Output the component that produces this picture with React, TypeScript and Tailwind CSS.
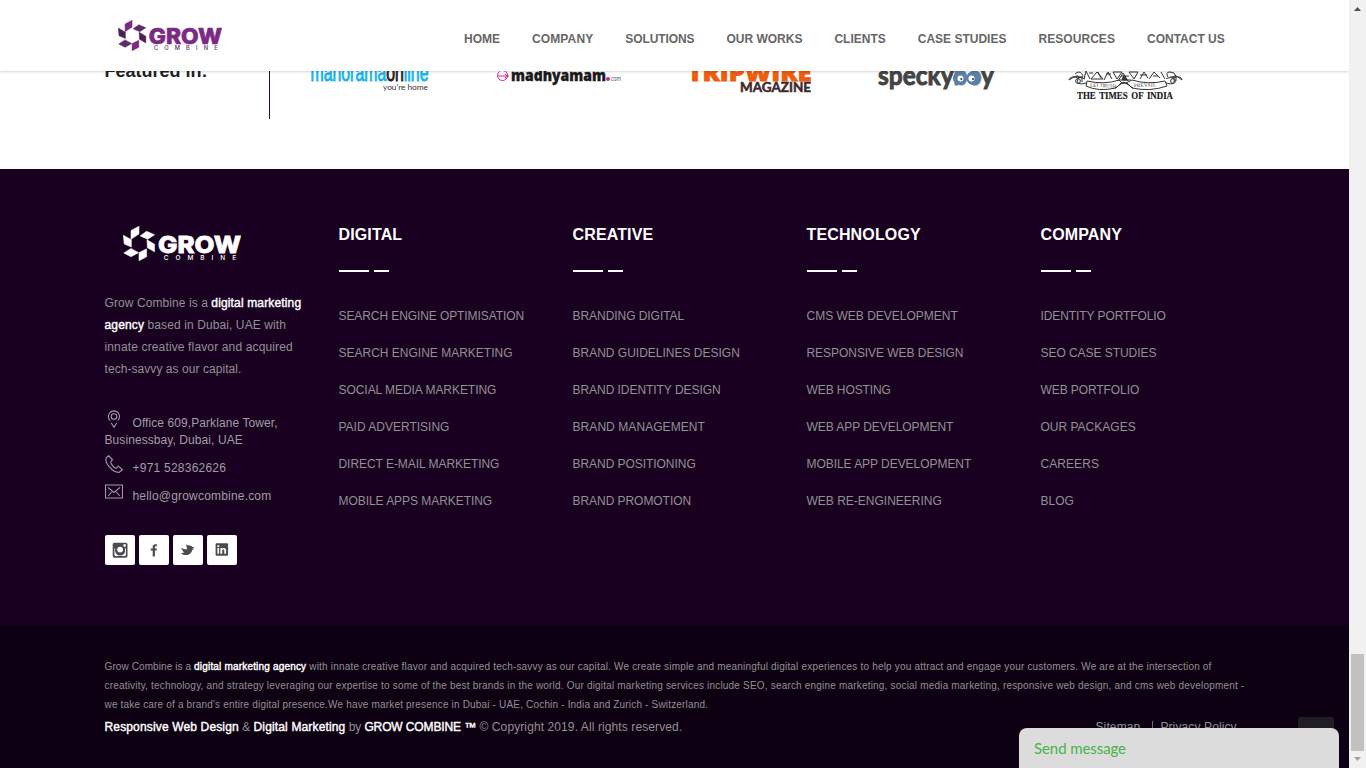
import React from "react";

const nav = [
  ["HOME", ""],
  ["COMPANY", "tracking-[0.12px]"],
  ["SOLUTIONS", "tracking-[-0.1px]"],
  ["OUR WORKS", ""],
  ["CLIENTS", ""],
  ["CASE STUDIES", ""],
  ["RESOURCES", "tracking-[0.06px]"],
  ["CONTACT US", ""],
];

const tight = "tracking-[-0.05px]";
const tighter = "tracking-[-0.09px]";
const loose = "tracking-[0.07px]";

const columns = [
  {
    title: "DIGITAL",
    links: [["SEARCH ENGINE OPTIMISATION", tighter], ["SEARCH ENGINE MARKETING", ""], ["SOCIAL MEDIA MARKETING", tight], ["PAID ADVERTISING", ""], ["DIRECT E-MAIL MARKETING", tight], ["MOBILE APPS MARKETING", tight]],
  },
  {
    title: "CREATIVE",
    links: [["BRANDING DIGITAL", tight], ["BRAND GUIDELINES DESIGN", ""], ["BRAND IDENTITY DESIGN", tight], ["BRAND MANAGEMENT", loose], ["BRAND POSITIONING", tight], ["BRAND PROMOTION", tight]],
  },
  {
    title: "TECHNOLOGY",
    links: [["CMS WEB DEVELOPMENT", ""], ["RESPONSIVE WEB DESIGN", tight], ["WEB HOSTING", tighter], ["WEB APP DEVELOPMENT", tight], ["MOBILE APP DEVELOPMENT", tight], ["WEB RE-ENGINEERING", ""]],
  },
  {
    title: "COMPANY",
    links: [["IDENTITY PORTFOLIO", tighter], ["SEO CASE STUDIES", tight], ["WEB PORTFOLIO", tighter], ["OUR PACKAGES", ""], ["CAREERS", loose], ["BLOG", ""]],
  },
];

function GrowLogo({ className, main, mid, dark }: { className: string; main: string; mid: string; dark: string }) {
  return (
    <svg className={className} viewBox="84 60 310 92" preserveAspectRatio="none">
      <g strokeWidth="1.4" strokeLinejoin="round">
        <path fill={main} stroke={main} d="M105 72L126 60.5V81L105 95Z" />
        <path fill={mid} stroke={mid} d="M129 86L146 74L167 83L149 95Z" />
        <path fill={dark} stroke={dark} d="M147 96L167 108V128L148 117Z" />
        <path fill={dark} stroke={dark} d="M85 84L106 96V115L87 107Z" />
        <path fill={mid} stroke={mid} d="M86 131L105 119L125 130L105 141Z" />
        <path fill={main} stroke={main} d="M126 130L146 120V141L126 151.5Z" />
      </g>
      <text x="176" y="130" fill={main} stroke={main} strokeWidth="2" fontFamily="Inter, sans-serif" fontWeight="800" fontSize="62" textLength="218" lengthAdjust="spacingAndGlyphs">GROW</text>
      <text x="191" y="149" fill={mid} fontFamily="Inter, sans-serif" fontWeight="500" fontSize="17" textLength="190">COMBINE</text>
    </svg>
  );
}

function Strong({ children, className = "tracking-[0.15px]" }: { children: React.ReactNode; className?: string }) {
  return <span className={`text-white [-webkit-text-stroke:0.4px_white] ${className}`}>{children}</span>;
}

function PressLogos() {
  return (
    <svg className="h-[60px] w-[900px] shrink-0" viewBox="300 60 900 60">
      <g fontFamily="'Open Sans', sans-serif">
        <text x="310.5" y="80.5" fill="#12b5ea" stroke="#12b5ea" strokeWidth=".9" fontFamily="'Liberation Sans', sans-serif" fontSize="23" textLength="118" lengthAdjust="spacingAndGlyphs">
          manorama<tspan fill="#222" stroke="#222">on</tspan>line
        </text>
        <text x="383" y="90" fill="#333" fontFamily="Lato, sans-serif" fontSize="8.3" textLength="45">you're home</text>

        <g fill="none" stroke="#d9209a">
          <circle cx="502.5" cy="75.5" r="5" strokeDasharray="20 4" />
          <path d="M498 76h11M505 74l3 2-3 2" />
        </g>
        <text x="511" y="80.5" fill="#1c1a1c" stroke="#1c1a1c" strokeWidth=".4" fontWeight="800" fontSize="16.5" textLength="95" lengthAdjust="spacingAndGlyphs">madhyamam</text>
        <circle cx="608" cy="79" r="2" fill="#d9209a" />
        <text x="611" y="81" fill="#444" fontSize="6.5" textLength="10" lengthAdjust="spacingAndGlyphs">com</text>

        <text x="687.5" y="80.5" fill="#ee5c0c" stroke="#ee5c0c" strokeWidth=".8" fontWeight="800" fontSize="23" textLength="124" lengthAdjust="spacingAndGlyphs">TRIPWIRE</text>
        <text x="740" y="91.5" fill="#41292b" stroke="#41292b" strokeWidth=".5" fontFamily="Lato, sans-serif" fontWeight="700" fontSize="12.6" textLength="71" lengthAdjust="spacingAndGlyphs">MAGAZINE</text>

        <text x="878" y="84.5" fill="#444" stroke="#444" strokeWidth=".9" fontFamily="Lato, sans-serif" fontWeight="700" fontSize="26" textLength="116" lengthAdjust="spacingAndGlyphs">
          specky<tspan fill="#5c7fa6" stroke="#5c7fa6">bo</tspan>y
        </text>
        <circle cx="959.5" cy="78" r="6.6" fill="#5c7fa6" />
        <circle cx="973" cy="78" r="6.6" fill="#5c7fa6" />
        <circle cx="960.5" cy="78.5" r="3" fill="#fff" />
        <circle cx="971.5" cy="78.5" r="3" fill="#fff" />
        <circle cx="961.3" cy="79" r="1" fill="#333" />
        <circle cx="973" cy="79" r="1" fill="#333" />

        <g fill="none" stroke="#333" strokeWidth="1">
          <path d="M1087 81Q1105 85 1119 80L1122 83H1126L1132 80Q1148 85 1165 81L1167 86Q1150 92 1132 88L1127 83H1121L1116 88Q1098 92 1086 86Z" />
          <path d="M1086 83Q1075 86 1078 79T1069 80Q1070 76 1077 77T1085 79M1166 83Q1176 86 1174 79T1182 80Q1182 76 1174 77T1166 79" />
          <circle cx="1078" cy="81" r="2.4" />
          <circle cx="1173" cy="81" r="2.4" />
          <path d="M1075 74q4-4 7 0t-3 3M1084 79l2-8 4 8M1091 79l6-7 6 7zM1098 72l3 6M1104 80l4-8 4 7M1113 72h9l-5 7zM1129 72h9l-4 7zM1118 81l5-8 5 8M1140 79l4-7 4 6M1149 79l5-7 6 6M1161 72l4 7M1168 77q-3-5 2-5t6 4" />
          <path d="M1119 80h12M1121 76h8M1115 88l9-6 9 6M1089 73h4M1106 74h5M1140 75h7M1153 76h5" />
          <path d="M1122 80l2-5 3 5z" fill="#333" />
          <path d="M1074 77h8v5M1170 77h6v4" />
        </g>
        <text transform="translate(1090 86.5) rotate(3)" fontFamily="'Liberation Serif', serif" fontSize="5" fill="#333" textLength="26">LET TRUTH</text>
        <text transform="translate(1134 87) rotate(-2)" fontFamily="'Liberation Serif', serif" fontSize="5" fill="#333" textLength="22">PREVAIL</text>
        <text x="1077" y="99" fill="#151515" stroke="#151515" strokeWidth=".15" fontFamily="'Liberation Serif', serif" fontWeight="700" fontSize="9.3" textLength="96" lengthAdjust="spacingAndGlyphs" wordSpacing="1.5">THE TIMES OF INDIA</text>
      </g>
    </svg>
  );
}

function Contact({ children, icon }: { children: React.ReactNode; icon: React.ReactNode }) {
  return (
    <>
      <svg className="mr-[10px] inline-block h-[18px] w-[18px] align-[-1px]" viewBox="0 0 18 18" fill="none" stroke="#a09ba6" strokeWidth="1.1">{icon}</svg>
      {children}
    </>
  );
}

function Socials() {
  const icons = [
    <g key="i"><rect x="7.7" y="7.7" width="14.8" height="15" rx="1.8" /><path fill="#fff" d="M18.4 9.2h2.4v2.6h-2.4zM9.4 13.4h1.4a4.9 4.9 0 1 0 8.7 0h1.4v6.4c0 .7-.4 1.1-1.1 1.1h-9.3c-.7 0-1.1-.4-1.1-1.1z" /><circle cx="15.1" cy="15" r="4.9" /><circle cx="15.1" cy="14.6" r="2.9" fill="#fff" /></g>,
    <path key="f" d="M13.7 21.4v-5.8h-2v-2h2V12c0-1.9 1.1-2.8 2.8-2.8h1.4v2h-1.1c-.8 0-.9.4-.9 1v1.4h2l-.3 2h-1.7v5.8z" />,
    <path key="t" d="M7.8 17.9c1.6.2 2.8 0 3.9-.9-1.2-.1-2-.7-2.5-1.6h1.1c-1.2-.5-1.9-1.3-2.2-2.4l3 1c1.4.4 2.3.4 3.3.2-.8-1.7-1.3-3-.9-5 1.1 1.2 2 1.2 3.1 1.2 1.3 0 2.3.6 2.9 1.6l2 .2-1.7 1.3 1.1.8-1.6.4c-.6 3.3-2.8 5.2-6 5.4-2.1.1-4-.5-5.5-2.2z" />,
    <g key="l"><rect x="8.6" y="8.2" width="12.5" height="12.6" rx="1" /><path fill="#fff" d="M10.4 13h1.7v5.8h-1.7zM10.4 10.2h1.8v1.7h-1.8zM13.4 13h1.7v.8c1-1.5 4-1.2 4 1.3v3.7h-1.8v-3.2c0-1.5-2.1-1.5-2.1 0v3.2h-1.8z" /></g>,
  ];
  return (
    <div className="mt-[23px] flex gap-1">
      {icons.map((icon, i) => (
        <a key={i} className="size-[30px] rounded-[2px] bg-white">
          <svg viewBox="0 0 30 30" className="size-[30px]" fill="#4d4b50">{icon}</svg>
        </a>
      ))}
    </div>
  );
}

export default function App() {
  return (
    <div className="flex h-[768px] w-[1366px] overflow-hidden bg-white font-['Liberation_Sans',Arial,sans-serif] text-[12px] text-[#919191]">
      <div className="relative flex w-[1349px] shrink-0 flex-col overflow-hidden">
        <header className="absolute inset-x-0 top-0 z-10 flex h-[71px] items-start bg-white pl-[118px] shadow-[0_0_3px_rgba(0,0,0,0.3)]">
          <GrowLogo className="mt-5 h-[31px] w-[104px]" main="#7b2a84" mid="#5f2a68" dark="#4a2154" />
          <nav className="ml-[242px] mt-[30px] flex gap-8 text-[12px] leading-[18px] font-bold whitespace-nowrap text-[#666]">
            {nav.map(([label, spacing]) => <a key={label} className={spacing}>{label}</a>)}
          </nav>
        </header>

        <section className="flex h-[169px] shrink-0 pl-[104.5px] pt-[59px]">
          <h3 className="h-[60px] w-[165.5px] border-r border-[#2a0d33] text-[18px] leading-[24px] font-bold text-[#222]">Featured in:</h3>
          <div className="ml-[30px] mt-px flex"><PressLogos /></div>
        </section>

        <footer className="flex h-[456px] shrink-0 bg-[#190021] pl-[104.5px]">
          <div className="w-[234px]">
            <GrowLogo className="ml-[18px] mt-[57px] h-[35px] w-[118px]" main="#fff" mid="#fff" dark="#fff" />
            <p className="mt-[31px] text-[12px] leading-[22px] whitespace-nowrap">
              <span className="tracking-[0.08px]">Grow Combine is a </span><Strong>digital marketing</Strong><br />
              <Strong>agency</Strong><span className="tracking-[0.1px]"> based in Dubai, UAE with</span><br />
              <span className="tracking-[0.14px]">innate creative flavor and acquired</span><br />
              <span className="tracking-[0.06px]">tech-savvy as our capital.</span>
            </p>
            <div className="mt-[30px] whitespace-nowrap text-[#a09ea2]">
              <p className="leading-[17px] tracking-[0.08px]">
                <Contact icon={<g><path d="M9 17.5L6.2 12.8M9 17.5L11.8 12.8M5.3 10.7A5.6 5.6 0 1 1 12.7 10.7" /><circle cx="9" cy="6.5" r="2.8" /></g>}>Office 609,Parklane Tower,</Contact><br />
                Businessbay, Dubai, UAE
              </p>
              <p className="mt-[6px] h-7 leading-[17px] tracking-[0.23px]">
                <Contact icon={<path d="M3.7.8L1.4 2.5C-1 7 7 17.5 14 17.4L17.4 14.8 13.3 11.2 11.1 13.3C8.5 12.6 5.9 9 5.7 6.7L7.5 4.8Z" />}>+971 528362626</Contact>
              </p>
              <p className="h-[29px] leading-[17px] tracking-[0.19px]">
                <Contact icon={<g><path d="M.5 2h17v13H.5z" /><path d="M3 4.5l6 5 6-5M3.2 13l3.5-4M14.8 13l-3.5-4" /></g>}>hello@growcombine.com</Contact>
              </p>
            </div>
            <Socials />
          </div>
          {columns.map((c) => (
            <div key={c.title} className="w-[234px] pt-[55px] whitespace-nowrap">
              <h4 className="text-[16px] leading-[22px] font-bold tracking-[0.14px] text-white">{c.title}</h4>
              <div className="mt-6 flex gap-[5px]">
                <span className="h-[2px] w-[30px] bg-white" />
                <span className="h-[2px] w-[15px] bg-white" />
              </div>
              <ul className="mt-[26px]">
                {c.links.map(([label, spacing]) => <li key={label} className={`h-[37px] leading-[37px] ${spacing}`}>{label}</li>)}
              </ul>
            </div>
          ))}
        </footer>

        <div className="grow bg-[#0d0012] pl-[104.5px] pt-8 whitespace-nowrap">
          <p className="text-[10px] leading-[19px] tracking-[0.19px]">
            <span className="tracking-[0.1px]">Grow Combine is a </span><Strong className="tracking-[0.18px]">digital marketing agency</Strong> with innate creative flavor and acquired tech-savvy as our capital. We create simple and meaningful digital experiences to help you attract and engage your customers. We are at the intersection of<br />
            creativity, technology, and strategy leveraging our expertise to some of the best brands in the world. Our digital marketing services include SEO, search engine marketing, social media marketing, responsive web design, and cms web development -<br />
            <span className="tracking-[0.175px]">we take care of a brand's entire digital presence.We have market presence in Dubai - UAE, Cochin - India and Zurich - Switzerland.</span>
          </p>
          <div className="mt-[3px] flex items-start text-[12px] leading-[20px] tracking-[0.12px]">
            <p className="w-[991px]">
              <Strong>Responsive Web Design</Strong><span className="tracking-normal"> &amp; </span><Strong>Digital Marketing</Strong><span className="tracking-[-0.1px]"> by </span><Strong className="tracking-[-0.12px]">GROW COMBINE ™</Strong><span className="tracking-[0.1px]"> © Copyright 2019. All rights reserved.</span>
            </p>
            <span>Sitemap</span>
            <span className="ml-3 mr-[7px] mt-1 h-3 border-l border-[#6e6873]" />
            <span>Privacy Policy</span>
          </div>
        </div>

        <div className="absolute left-[1298px] top-[717px] h-9 w-9 rounded-[2px] bg-[#211d24]" />
        <div className="absolute left-[1019px] top-[728px] h-10 w-[320px] rounded-t-[8px] bg-[#dcdcdc] pl-[15px] pt-[8px] font-[Lato,sans-serif] text-[15px] leading-[24px] tracking-[-0.08px] text-[#44b549]">Send message</div>
      </div>

      <div className="flex w-[17px] shrink-0 flex-col items-center bg-[#f1f1f1]">
        <svg className="h-[17px] w-[17px] shrink-0" viewBox="0 0 17 17"><path fill="#505050" d="M5 11L8.5 7L12 11Z" /></svg>
        <div className="mt-[637px] h-[97px] w-[13px] bg-[#c1c1c1]" />
        <svg className="h-[17px] w-[17px] shrink-0" viewBox="0 0 17 17"><path fill="#a3a3a3" d="M5 6L8.5 10L12 6Z" /></svg>
      </div>
    </div>
  );
}
